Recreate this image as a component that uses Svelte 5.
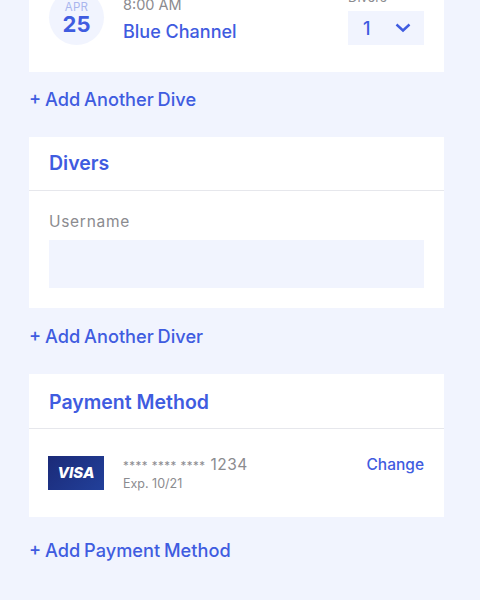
<script>
    const cards = { last4: "1234", exp: "10/21" };
</script>

<div class="page">
    <section class="card dive">
        <div class="date">
            <span class="month">APR</span>
            <span class="day">25</span>
        </div>
        <div class="info">
            <div class="time">8:00 AM</div>
            <div class="site">Blue Channel</div>
        </div>
        <div class="count">
            <div class="count-label">Divers</div>
            <div class="select">
                <span>1</span>
                <svg width="16" height="10" viewBox="0 0 16 10" fill="none">
                    <path d="M1.5 1.5 L8 7.5 L14.5 1.5" stroke="#3f5ce0" stroke-width="2.4" />
                </svg>
            </div>
        </div>
    </section>
    <div class="add first">+ Add Another Dive</div>

    <section class="card">
        <h2>Divers</h2>
        <div class="body">
            <div class="label">Username</div>
            <div class="input"></div>
        </div>
    </section>
    <div class="add second">+ Add Another Diver</div>

    <section class="card">
        <h2 class="pay">Payment Method</h2>
        <div class="payment">
            <div class="visa">VISA</div>
            <div class="number">
                <div class="digits"><span class="stars">**** **** ****</span> {cards.last4}</div>
                <div class="exp">Exp. {cards.exp}</div>
            </div>
            <div class="change">Change</div>
        </div>
    </section>
    <div class="add third">+ Add Payment Method</div>
</div>

<style>
    :global(body) {
        background: #f1f4fe;
        overflow: hidden;
    }

    .page {
        height: 600px;
        overflow: hidden;
        padding: 0 36px 0 29px;
        font-family: Inter, "Liberation Sans", sans-serif;
        color: #3f5ce0;
    }

    .card {
        background: #fff;
    }

    .dive {
        display: flex;
        height: 102px;
        margin-top: -30px;
        padding: 20px 20px 0;
        box-sizing: border-box;
    }

    .date {
        width: 55px;
        height: 55px;
        border-radius: 50%;
        background: #f1f4fe;
        display: flex;
        flex-direction: column;
        align-items: center;
        justify-content: center;
        flex-shrink: 0;
        padding-top: 1px;
        box-sizing: border-box;
    }
    .month {
        font-size: 11.5px;
        line-height: 12px;
        color: #a9b6ee;
        letter-spacing: 0.3px;
    }
    .day {
        font-size: 22px;
        line-height: 22px;
        font-weight: 700;
    }

    .info {
        flex: 1;
        margin-left: 19px;
    }
    .time {
        font-size: 14.5px;
        line-height: 17px;
        color: #8b8b8f;
        margin-top: 6px;
    }
    .site {
        font-size: 18px;
        line-height: 22px;
        font-weight: 500;
        margin-top: 8px;
    }

    .count {
        width: 76px;
    }
    .count-label {
        font-size: 13px;
        line-height: 16px;
        color: #8b8b8f;
        margin-top: -1px;
    }
    .select {
        height: 34px;
        margin-top: 6px;
        background: #f1f4fe;
        display: flex;
        align-items: center;
        justify-content: space-between;
        padding: 0 13px 0 15px;
        font-size: 18px;
        font-weight: 500;
    }

    .add {
        font-size: 18.2px;
        line-height: 22px;
        font-weight: 500;
        word-spacing: -1px;
    }
    .first {
        margin: 16px 0 27px;
    }
    .second {
        margin: 17px 0 27px;
    }
    .third {
        margin-top: 22px;
    }

    h2 {
        margin: 0;
        height: 53px;
        padding-left: 20px;
        font-size: 19.5px;
        line-height: 52px;
        font-weight: 600;
        border-bottom: 1px solid #e6e7ec;
    }
    h2.pay {
        height: 54px;
        line-height: 57px;
    }

    .body {
        padding: 21px 20px 20px;
    }
    .label {
        font-size: 15.5px;
        line-height: 20px;
        color: #8b8b8f;
        letter-spacing: 0.7px;
    }
    .input {
        height: 48px;
        margin-top: 8px;
        background: #f1f4fe;
    }

    .payment {
        display: flex;
        height: 88px;
        padding: 27px 20px 0 19px;
        box-sizing: border-box;
    }
    .visa {
        width: 56px;
        height: 34px;
        background: linear-gradient(135deg, #1b2a78, #22409a);
        color: #fff;
        font-size: 15px;
        font-weight: 800;
        font-style: italic;
        line-height: 34px;
        text-align: center;
    }
    .number {
        flex: 1;
        margin-left: 19px;
    }
    .digits {
        font-size: 15.5px;
        line-height: 18px;
        color: #8b8b8f;
        letter-spacing: 0.5px;
    }
    .stars {
        font-size: 11.5px;
    }
    .exp {
        font-size: 12.5px;
        line-height: 16px;
        color: #8b8b8f;
        margin-top: 1px;
    }
    .change {
        font-size: 15.5px;
        line-height: 20px;
        font-weight: 500;
        margin-top: -1px;
    }
</style>
